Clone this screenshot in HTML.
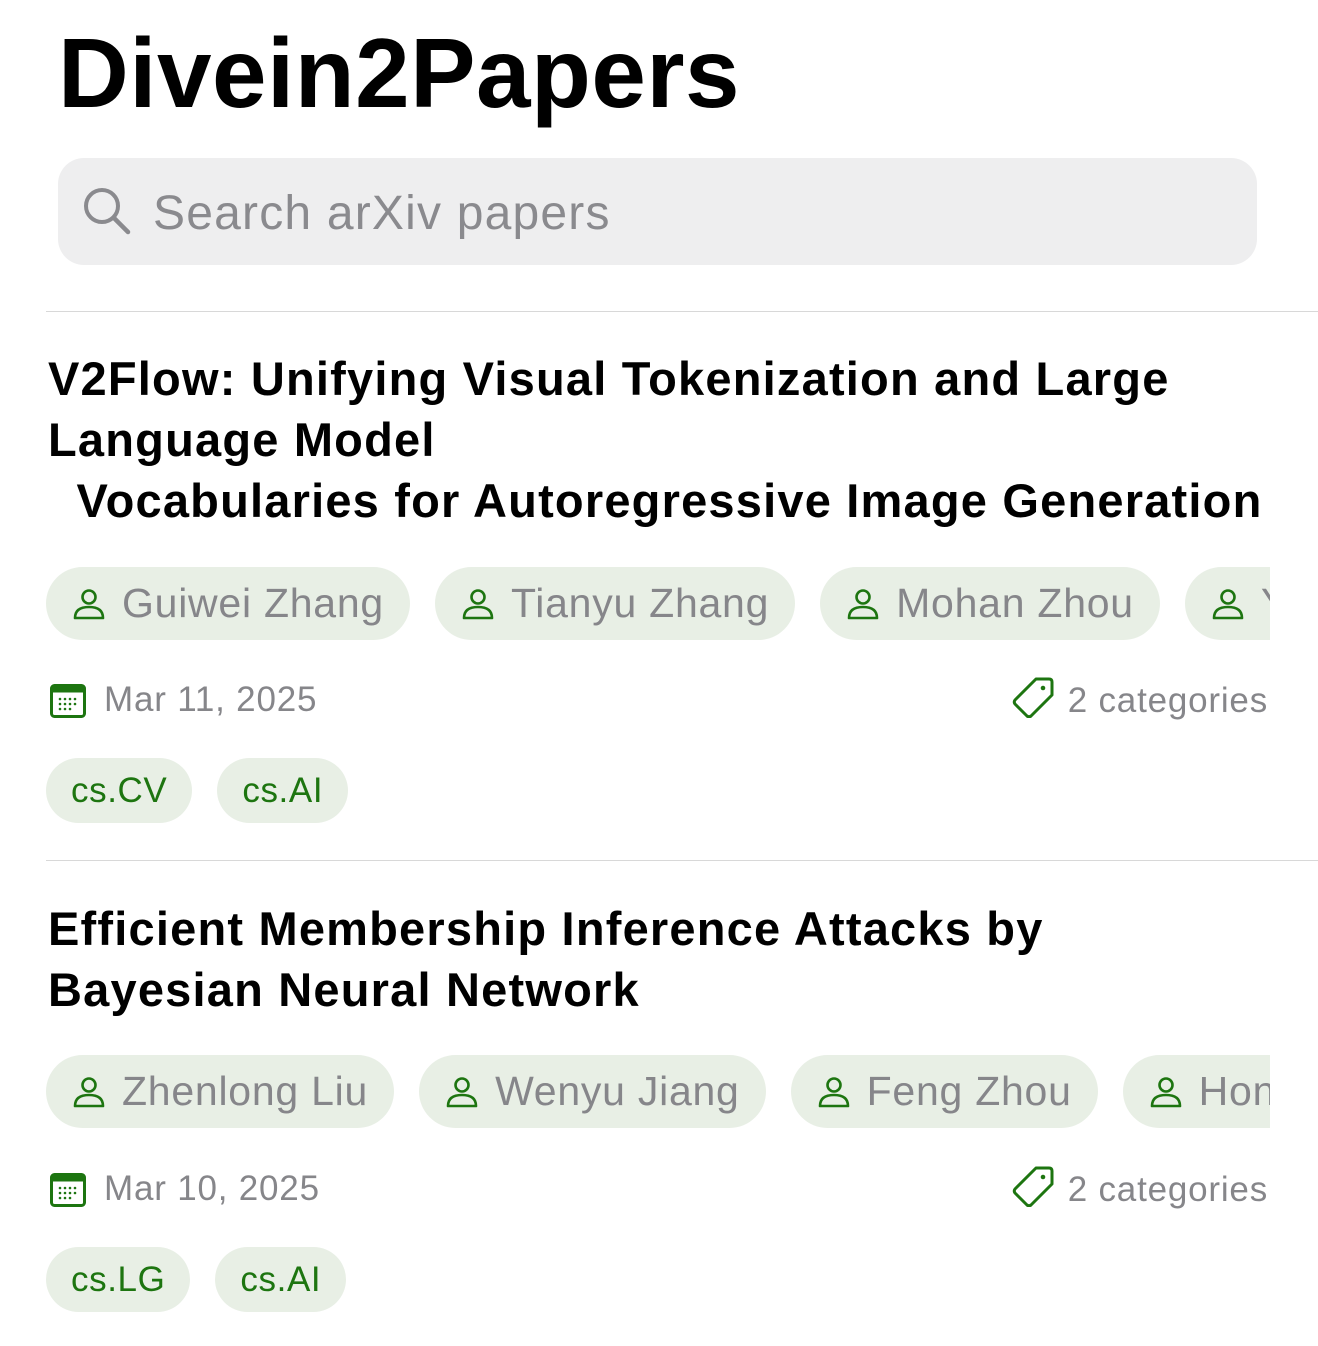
<!DOCTYPE html><html><head><meta charset="utf-8"><style>
body{margin:0;width:1318px;height:1346px;background:#fff;font-family:"Liberation Sans",sans-serif;overflow:hidden;position:relative}
h1{position:absolute;left:58px;top:18px;margin:0;font-size:98px;font-weight:bold;letter-spacing:0.5px;line-height:110px;color:#000}
.search{position:absolute;left:58px;top:158px;width:1199px;height:107px;border-radius:26px;background:#eeeeef}
.search span{position:absolute;left:95px;top:28px;font-size:48px;color:#8a8a8e;letter-spacing:1.2px}
.hr{position:absolute;left:46px;right:0;height:1px;background:#d8d8d8}
.t{position:absolute;left:48px;font-size:47px;font-weight:bold;line-height:61px;color:#000;white-space:pre;letter-spacing:1.2px}
.row{position:absolute;left:46px;width:1224px;overflow:hidden;white-space:nowrap;height:76px}
.chip{display:inline-flex;align-items:center;height:73px;border-radius:37px;background:#e8efe5;padding:0 26px;margin-right:25px;font-size:41px;color:#86868a;vertical-align:top;letter-spacing:0.75px}
.chip svg{margin-right:16px}
.meta{position:absolute;left:48px;width:1220px;height:44px;font-size:35px;color:#86868a;letter-spacing:0.8px}
.meta .d{position:absolute;left:56px;top:0}
.meta .c{position:absolute;right:0;top:-4px}
.cat{display:inline-block;height:65px;line-height:65px;border-radius:33px;background:#e8efe5;padding:0 25px;margin-right:25px;font-size:35px;color:#1d7510;letter-spacing:0.6px}
</style></head><body>
<h1>Divein2Papers</h1>
<div class="search"><svg style="position:absolute;left:24px;top:28px" width="50" height="50" viewBox="0 0 50 50"><circle cx="20" cy="20" r="16" fill="none" stroke="#8a8a8e" stroke-width="4"/><line x1="32" y1="32" x2="46" y2="46" stroke="#8a8a8e" stroke-width="4.5" stroke-linecap="round"/></svg><span>Search arXiv papers</span></div>
<div class="hr" style="top:311px"></div>
<div class="t" style="top:348px">V2Flow: Unifying Visual Tokenization and Large
Language Model
  Vocabularies for Autoregressive Image Generation</div>
<div class="row" style="top:567px">
<span class="chip"><svg width="34" height="34" viewBox="0 0 34 34"><circle cx="17" cy="10" r="6.5" fill="none" stroke="#1d7510" stroke-width="2.6"/><path d="M3 31 Q3 20 17 20 Q31 20 31 31 Z" fill="none" stroke="#1d7510" stroke-width="2.6" stroke-linejoin="round"/></svg>Guiwei Zhang</span><span class="chip"><svg width="34" height="34" viewBox="0 0 34 34"><circle cx="17" cy="10" r="6.5" fill="none" stroke="#1d7510" stroke-width="2.6"/><path d="M3 31 Q3 20 17 20 Q31 20 31 31 Z" fill="none" stroke="#1d7510" stroke-width="2.6" stroke-linejoin="round"/></svg>Tianyu Zhang</span><span class="chip"><svg width="34" height="34" viewBox="0 0 34 34"><circle cx="17" cy="10" r="6.5" fill="none" stroke="#1d7510" stroke-width="2.6"/><path d="M3 31 Q3 20 17 20 Q31 20 31 31 Z" fill="none" stroke="#1d7510" stroke-width="2.6" stroke-linejoin="round"/></svg>Mohan Zhou</span><span class="chip"><svg width="34" height="34" viewBox="0 0 34 34"><circle cx="17" cy="10" r="6.5" fill="none" stroke="#1d7510" stroke-width="2.6"/><path d="M3 31 Q3 20 17 20 Q31 20 31 31 Z" fill="none" stroke="#1d7510" stroke-width="2.6" stroke-linejoin="round"/></svg>Yuxin Wang</span>
</div>
<div class="meta" style="top:680px"><svg style="position:absolute;left:2px;top:4px" width="36" height="34" viewBox="0 0 36 34"><rect x="1.5" y="1.5" width="33" height="31" rx="3" fill="none" stroke="#1d7510" stroke-width="3"/><rect x="1.5" y="1.5" width="33" height="7" fill="#1d7510"/><g fill="#1d7510"><circle cx="10" cy="15" r="1.3"/><circle cx="15" cy="15" r="1.3"/><circle cx="20" cy="15" r="1.3"/><circle cx="25" cy="15" r="1.3"/><circle cx="10" cy="20" r="1.3"/><circle cx="15" cy="20" r="1.3"/><circle cx="20" cy="20" r="1.3"/><circle cx="25" cy="20" r="1.3"/><circle cx="10" cy="25" r="1.3"/><circle cx="15" cy="25" r="1.3"/><circle cx="20" cy="25" r="1.3"/></g></svg><span class="d">Mar 11, 2025</span><span class="c"><svg style="vertical-align:-6px;margin-right:14px" width="42" height="42" viewBox="0 0 42 42"><path d="M24 3 H37 Q40 3 40 6 V19 L19 40 Q17 41.5 15 40 L3 28 Q1.5 26 3 24 Z" fill="none" stroke="#1d7510" stroke-width="3" stroke-linejoin="round"/><circle cx="31" cy="12" r="2.3" fill="#1d7510"/></svg>2 categories</span></div>
<div style="position:absolute;left:46px;top:758px"><span class="cat">cs.CV</span><span class="cat">cs.AI</span></div>
<div class="hr" style="top:860px"></div>
<div class="t" style="top:898px">Efficient Membership Inference Attacks by
Bayesian Neural Network</div>
<div class="row" style="top:1055px">
<span class="chip"><svg width="34" height="34" viewBox="0 0 34 34"><circle cx="17" cy="10" r="6.5" fill="none" stroke="#1d7510" stroke-width="2.6"/><path d="M3 31 Q3 20 17 20 Q31 20 31 31 Z" fill="none" stroke="#1d7510" stroke-width="2.6" stroke-linejoin="round"/></svg>Zhenlong Liu</span><span class="chip"><svg width="34" height="34" viewBox="0 0 34 34"><circle cx="17" cy="10" r="6.5" fill="none" stroke="#1d7510" stroke-width="2.6"/><path d="M3 31 Q3 20 17 20 Q31 20 31 31 Z" fill="none" stroke="#1d7510" stroke-width="2.6" stroke-linejoin="round"/></svg>Wenyu Jiang</span><span class="chip"><svg width="34" height="34" viewBox="0 0 34 34"><circle cx="17" cy="10" r="6.5" fill="none" stroke="#1d7510" stroke-width="2.6"/><path d="M3 31 Q3 20 17 20 Q31 20 31 31 Z" fill="none" stroke="#1d7510" stroke-width="2.6" stroke-linejoin="round"/></svg>Feng Zhou</span><span class="chip"><svg width="34" height="34" viewBox="0 0 34 34"><circle cx="17" cy="10" r="6.5" fill="none" stroke="#1d7510" stroke-width="2.6"/><path d="M3 31 Q3 20 17 20 Q31 20 31 31 Z" fill="none" stroke="#1d7510" stroke-width="2.6" stroke-linejoin="round"/></svg>Hongxin Wei</span>
</div>
<div class="meta" style="top:1169px"><svg style="position:absolute;left:2px;top:4px" width="36" height="34" viewBox="0 0 36 34"><rect x="1.5" y="1.5" width="33" height="31" rx="3" fill="none" stroke="#1d7510" stroke-width="3"/><rect x="1.5" y="1.5" width="33" height="7" fill="#1d7510"/><g fill="#1d7510"><circle cx="10" cy="15" r="1.3"/><circle cx="15" cy="15" r="1.3"/><circle cx="20" cy="15" r="1.3"/><circle cx="25" cy="15" r="1.3"/><circle cx="10" cy="20" r="1.3"/><circle cx="15" cy="20" r="1.3"/><circle cx="20" cy="20" r="1.3"/><circle cx="25" cy="20" r="1.3"/><circle cx="10" cy="25" r="1.3"/><circle cx="15" cy="25" r="1.3"/><circle cx="20" cy="25" r="1.3"/></g></svg><span class="d">Mar 10, 2025</span><span class="c"><svg style="vertical-align:-6px;margin-right:14px" width="42" height="42" viewBox="0 0 42 42"><path d="M24 3 H37 Q40 3 40 6 V19 L19 40 Q17 41.5 15 40 L3 28 Q1.5 26 3 24 Z" fill="none" stroke="#1d7510" stroke-width="3" stroke-linejoin="round"/><circle cx="31" cy="12" r="2.3" fill="#1d7510"/></svg>2 categories</span></div>
<div style="position:absolute;left:46px;top:1247px"><span class="cat">cs.LG</span><span class="cat">cs.AI</span></div>
</body></html>
